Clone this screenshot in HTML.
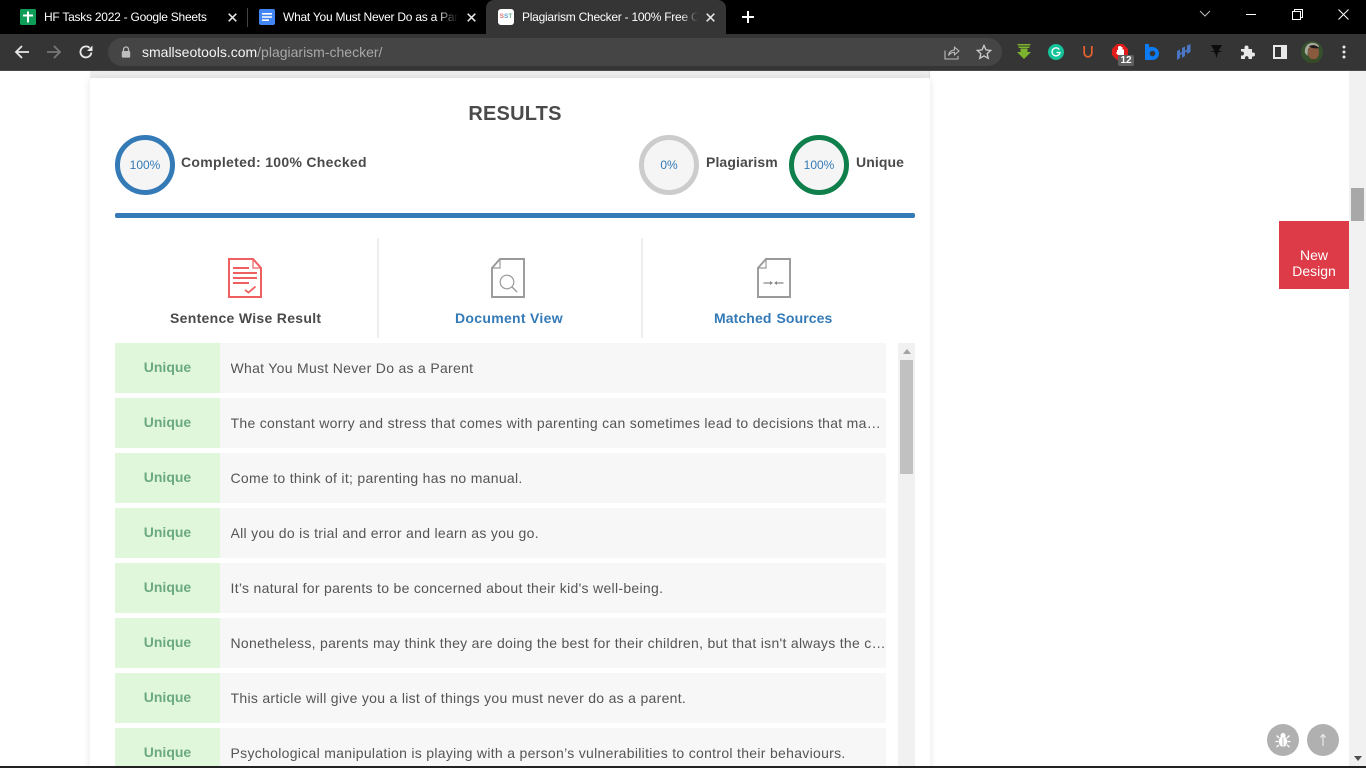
<!DOCTYPE html>
<html><head><meta charset="utf-8"><style>
*{box-sizing:border-box}
html,body{margin:0;padding:0;width:1366px;height:768px;overflow:hidden;background:#fff;font-family:"Liberation Sans",sans-serif}
#w{position:absolute;left:0;top:0;width:1366px;height:768px;overflow:hidden;background:#fff}
.a{position:absolute}
.t{position:absolute;white-space:nowrap;overflow:hidden}
.tab{color:#fff;font-size:12px;top:9px;height:16px;line-height:16px;letter-spacing:-.25px}
.row{position:absolute;left:115px;width:771px;height:50px;background:#f7f7f7}
.row b{position:absolute;left:0;top:0;width:105px;height:50px;background:#e1f7dc;color:#6aaa7e;font-size:14px;line-height:49px;text-align:center}
.row span{position:absolute;left:115.5px;top:0;width:655.5px;height:50px;line-height:50px;font-size:14px;color:#555;letter-spacing:.3px;white-space:nowrap;overflow:hidden;text-overflow:ellipsis}
.circ{position:absolute;top:135px;width:60px;height:60px;border-radius:50%;background:#f5f5f5;border:5px solid;color:#337ab7;font-size:12px;text-align:center;line-height:50px}
.lbl{position:absolute;top:154px;font-size:14px;font-weight:bold;color:#4a4a4a;letter-spacing:.1px;white-space:nowrap;line-height:16px}
.tb{position:absolute;top:310px;font-size:14px;font-weight:bold;letter-spacing:.3px;white-space:nowrap;line-height:16px}
</style></head><body><div id="w">
<!-- tab strip -->
<div class="a" style="left:0;top:0;width:1366px;height:34px;background:#000"></div>
<div class="a" style="left:486px;top:0;width:240px;height:34px;background:#353535;border-radius:8px 8px 0 0"></div>
<div class="a" style="left:247px;top:8px;width:1px;height:19px;background:#444"></div>
<!-- sheets icon -->
<svg class="a" style="left:20px;top:9px" width="16" height="16" viewBox="0 0 16 16"><rect width="16" height="16" rx="1.5" fill="#0f9d58"/><path d="M7 2.500h2v3h4v2H9v6H7v-6H3v-2h4z" fill="#fff"/></svg>
<div class="t tab" style="left:44px;width:170px">HF Tasks 2022 - Google Sheets</div>
<svg class="a" style="left:228px;top:13px" width="9" height="9" viewBox="0 0 9 9"><path d="M.7.7l7.600 7.600M8.300.7L.7 8.300" stroke="#e8e8e8" stroke-width="1.500"/></svg>
<!-- docs icon -->
<svg class="a" style="left:259px;top:9px" width="16" height="16" viewBox="0 0 16 16"><rect width="16" height="16" rx="2" fill="#4285f4"/><path d="M3 4h10v1.600H3zM3 7.200h10v1.600H3zM3 10.400h7V12H3z" fill="#fff"/></svg>
<div class="t tab" style="left:283px;width:175px;-webkit-mask-image:linear-gradient(90deg,#000 88%,transparent);">What You Must Never Do as a Parent</div>
<svg class="a" style="left:467px;top:13px" width="9" height="9" viewBox="0 0 9 9"><path d="M.7.7l7.600 7.600M8.300.7L.7 8.300" stroke="#e8e8e8" stroke-width="1.500"/></svg>
<!-- sst icon -->
<div class="a" style="left:498px;top:9px;width:16px;height:16px;background:#fff;border-radius:3px;font-size:6.5px;font-weight:bold;line-height:16px;text-align:center;white-space:nowrap"><span style="color:#e57373">S</span><span style="color:#64a0d8">S</span><span style="color:#6bb38a">T</span></div>
<div class="t tab" style="left:522px;width:176px;-webkit-mask-image:linear-gradient(90deg,#000 90%,transparent);">Plagiarism Checker - 100% Free Online</div>
<svg class="a" style="left:706px;top:13px" width="9" height="9" viewBox="0 0 9 9"><path d="M.7.7l7.600 7.600M8.300.7L.7 8.300" stroke="#e8e8e8" stroke-width="1.500"/></svg>
<svg class="a" style="left:741px;top:10px" width="14" height="14" viewBox="0 0 14 14"><path d="M7 1v12M1 7h12" stroke="#fff" stroke-width="2"/></svg>
<!-- window controls -->
<svg class="a" style="left:1199px;top:10px" width="12" height="8" viewBox="0 0 12 8"><path d="M1 1l5 5 5-5" fill="none" stroke="#bbb" stroke-width="1"/></svg>
<div class="a" style="left:1246px;top:14px;width:10px;height:1px;background:#fff"></div>
<svg class="a" style="left:1292px;top:9px" width="11" height="11" viewBox="0 0 11 11"><path d="M.5 2.500h8v8h-8zM2.500 2.500v-2h8v8h-2" fill="none" stroke="#fff"/></svg>
<svg class="a" style="left:1338px;top:9px" width="11" height="11" viewBox="0 0 11 11"><path d="M.5.5l10 10M10.500.5l-10 10" stroke="#fff" stroke-width="1"/></svg>
<!-- toolbar -->
<div class="a" style="left:0;top:34px;width:1366px;height:36px;background:#353535"></div>
<div class="a" style="left:0;top:70px;width:1366px;height:1px;background:#4a4a4a"></div>
<svg class="a" style="left:14px;top:44px" width="16" height="16" viewBox="0 0 16 16"><path d="M15 8H2M8 2L2 8l6 6" fill="none" stroke="#e8e8e8" stroke-width="1.800"/></svg>
<svg class="a" style="left:46px;top:44px" width="16" height="16" viewBox="0 0 16 16"><path d="M1 8h13M8 2l6 6-6 6" fill="none" stroke="#777" stroke-width="1.800"/></svg>
<svg class="a" style="left:78px;top:44px" width="16" height="16" viewBox="0 0 16 16"><path d="M13.400 8.500A5.500 5.500 0 1 1 11.600 3.800" fill="none" stroke="#e8e8e8" stroke-width="1.800"/><path d="M14.500 1.500v5.500H9z" fill="#e8e8e8"/></svg>
<div class="a" style="left:108px;top:38px;width:894px;height:28px;border-radius:14px;background:#454545"></div>
<svg class="a" style="left:121px;top:46px" width="10" height="12" viewBox="0 0 10 12"><path d="M2.500 5V3.500a2.500 2.500 0 0 1 5 0V5" fill="none" stroke="#bdbdbd" stroke-width="1.300"/><rect x=".8" y="5" width="8.400" height="6.600" rx="1" fill="#bdbdbd"/></svg>
<div class="t" style="left:142px;top:44px;height:17px;line-height:17px;font-size:14px;color:#f4f4f4;width:260px">smallseotools.com<span style="color:#a8a8a8">/plagiarism-checker/</span></div>
<svg class="a" style="left:944px;top:44px" width="16" height="16" viewBox="0 0 16 16"><path d="M1 6.500V15h13v-3" fill="none" stroke="#bbb" stroke-width="1.100"/><path d="M4.500 11.500c.5-3.500 3-5.500 6-5.500V3.200L15 7l-4.500 3.800V8.300c-2.500 0-4.500 1-6 3.200z" fill="none" stroke="#bbb" stroke-width="1.100"/></svg>
<svg class="a" style="left:976px;top:44px" width="16" height="16" viewBox="0 0 16 16"><path d="M8 1.500l2 4.400 4.700.5-3.500 3.200 1 4.700L8 11.900l-4.200 2.400 1-4.700L1.300 6.400 6 5.900z" fill="none" stroke="#c8c8c8" stroke-width="1.400"/></svg>
<!-- extensions -->
<svg class="a" style="left:1016px;top:43px" width="16" height="17" viewBox="0 0 16 17"><path d="M1 1h14l-1.500 1.500H2.500zM2 3.500h12L13 5H3z" fill="#7cb32c"/><path d="M4.500 5.500h7V9H15l-7 7-7-7h3.500z" fill="#7cb32c"/></svg>
<div class="a" style="left:1048px;top:44px;width:16px;height:16px;border-radius:50%;background:#15c39a"></div>
<svg class="a" style="left:1048px;top:44px" width="16" height="16" viewBox="0 0 16 16"><path d="M11.300 5.500A4 4 0 1 0 12 8.500H8.500" fill="none" stroke="#fff" stroke-width="1.300"/></svg>
<svg class="a" style="left:1083px;top:46px" width="10" height="12" viewBox="0 0 10 12"><path d="M1.200 0v7a3.800 3.800 0 0 0 7.600 0V0" fill="none" stroke="#e8622c" stroke-width="1.700"/></svg>
<svg class="a" style="left:1112px;top:44px" width="16" height="16" viewBox="0 0 16 16"><path d="M5 0h6l5 5v6l-5 5H5l-5-5V5z" fill="#e21b1b"/><path d="M4 9l1-1V6h1V2.500h1.200V2H9v1h1.500v2.500H12V11H6z" fill="#fff"/></svg>
<div class="a" style="left:1118px;top:55px;width:16px;height:11px;background:#5f5f5f;border-radius:2px;color:#fff;font-size:10px;font-weight:bold;line-height:11px;text-align:center">12</div>
<svg class="a" style="left:1145px;top:44px" width="15" height="16" viewBox="0 0 15 16"><path d="M0 0h4v3h3.500a6.500 6.500 0 0 1 0 13H0z" fill="#0d7bf2"/><circle cx="7.500" cy="9.500" r="2.800" fill="#353535"/></svg>
<svg class="a" style="left:1177px;top:44px" width="14" height="16" viewBox="0 0 14 16"><path d="M0 7l3-1.500V14l-3 2zM5 4l3-1.500V12l-3 2zM10 1.500L13.500 0v8L10 10zM3 9l2-1v2l-2 1zM8 6.500l2-1v2l-2 1z" fill="#4a76c4"/></svg>
<svg class="a" style="left:1209px;top:44px" width="15" height="15" viewBox="0 0 15 15"><path d="M2 1h11L9.500 7H14l-5 1.500L7.500 14 6 8.500 1 7h4.500z" fill="#0c0c0c"/></svg>
<svg class="a" style="left:1240px;top:44px" width="16" height="16" viewBox="0 0 16 16"><path d="M1 5h3.500V3.500a2 2 0 0 1 4 0V5H12v3.500h1a2 2 0 0 1 0 4h-1V15H8.500v-1.500a1.800 1.800 0 0 0-3.500 0V15H1v-3.500h1a2 2 0 0 0 0-4H1z" fill="#e8e8e8"/></svg>
<svg class="a" style="left:1273px;top:45px" width="14" height="14" viewBox="0 0 14 14"><path d="M0 0h14v14H0z" fill="#e8e8e8"/><path d="M2 2h6v10H2z" fill="#353535"/></svg>
<svg class="a" style="left:1301px;top:41px" width="22" height="22" viewBox="0 0 22 22"><circle cx="11" cy="11" r="11" fill="#35502c"/><path d="M4 12C3 5 8 1 13 2c3 .5 5 2 5 4L10 5 7 8l-.5 7z" fill="#a8a89c"/><ellipse cx="12.500" cy="11.500" rx="5.500" ry="7" fill="#8a5a3f"/><path d="M8 5.500c2-2 7-2 9.500 1L16 7.500l-5-.5z" fill="#1f1a18"/><path d="M6 22c1-3 4-4 6.500-4s4.500 1 5.500 3z" fill="#3a4a26"/></svg>
<svg class="a" style="left:1342px;top:45px" width="4" height="14" viewBox="0 0 4 14"><circle cx="2" cy="2" r="1.500" fill="#e8e8e8"/><circle cx="2" cy="7" r="1.500" fill="#e8e8e8"/><circle cx="2" cy="12" r="1.500" fill="#e8e8e8"/></svg>
<!-- page -->
<div class="a" style="left:90px;top:71px;width:840px;height:7px;background:#eee;border-right:1px solid #ddd"></div>
<div class="a" style="left:90px;top:78px;width:840px;height:700px;background:#fff;box-shadow:0 0 8px rgba(0,0,0,.1);border-radius:3px"></div>
<div class="t" style="left:115px;width:800px;top:102px;text-align:center;font-size:20px;line-height:24px;font-weight:bold;color:#4a4a4a;letter-spacing:.2px">RESULTS</div>
<div class="circ" style="left:115px;border-color:#337ab7">100%</div>
<div class="lbl" style="left:181px;letter-spacing:.3px">Completed: 100% Checked</div>
<div class="circ" style="left:639px;border-color:#ccc">0%</div>
<div class="lbl" style="left:706px">Plagiarism</div>
<div class="circ" style="left:789px;border-color:#0f7f4c">100%</div>
<div class="lbl" style="left:856px">Unique</div>
<div class="a" style="left:115px;top:213px;width:800px;height:5px;background:#337ab7;border-radius:2px"></div>
<div class="a" style="left:377px;top:238px;width:2px;height:100px;background:#eee"></div>
<div class="a" style="left:641px;top:238px;width:2px;height:100px;background:#eee"></div>
<svg class="a" style="left:227px;top:257px" width="36" height="42" viewBox="0 0 36 42" fill="none" stroke="#ef5f5f"><path d="M2 2h24l8 9v29H2z" stroke-width="2"/><path d="M26 2v9h8" stroke-width="1.200"/><path d="M6 11h16M6 16h24M6 21h24M6 26h16" stroke-width="1.900"/><path d="M18 33l3.500 2.500 7-6" stroke-width="1.800"/></svg>
<div class="tb" style="left:170px;color:#4a4a4a">Sentence Wise Result</div>
<svg class="a" style="left:490px;top:257px" width="36" height="42" viewBox="0 0 36 42" fill="none" stroke="#999"><path d="M10 2h24v38H2V11z" stroke-width="1.900"/><path d="M10 2v9H2" stroke-width="1.200"/><circle cx="17" cy="25" r="6.800" stroke-width="1.200"/><path d="M22 30l5 5" stroke-width="1.400"/></svg>
<div class="tb" style="left:455px;color:#337ab7;letter-spacing:.3px">Document View</div>
<svg class="a" style="left:755px;top:257px" width="36" height="42" viewBox="0 0 36 42" fill="none" stroke="#999"><path d="M11 2h24v38H3V11z" stroke-width="1.900"/><path d="M11 2v9H3" stroke-width="1.200"/><path d="M8.500 26h7M22 26h6.500" stroke-width="1.300" stroke="#888"/><path d="M15 24l3 2-3 2zM22 24l-3 2 3 2z" fill="#888" stroke="none"/></svg>
<div class="tb" style="left:714px;color:#337ab7;letter-spacing:.1px;word-spacing:1px">Matched Sources</div>
<div class="row" style="top:343px"><b>Unique</b><span>What You Must Never Do as a Parent</span></div>
<div class="row" style="top:398px"><b>Unique</b><span style="width:652px">The constant worry and stress that comes with parenting can sometimes lead to decisions that may affect your child's wellbeing.</span></div>
<div class="row" style="top:453px"><b>Unique</b><span>Come to think of it; parenting has no manual.</span></div>
<div class="row" style="top:508px"><b>Unique</b><span>All you do is trial and error and learn as you go.</span></div>
<div class="row" style="top:563px"><b>Unique</b><span>It’s natural for parents to be concerned about their kid's well-being.</span></div>
<div class="row" style="top:618px"><b>Unique</b><span>Nonetheless, parents may think they are doing the best for their children, but that isn't always the case for every single family.</span></div>
<div class="row" style="top:673px"><b>Unique</b><span>This article will give you a list of things you must never do as a parent.</span></div>
<div class="row" style="top:728px"><b>Unique</b><span>Psychological manipulation is playing with a person’s vulnerabilities to control their behaviours.</span></div>
<!-- inner scrollbar -->
<div class="a" style="left:898px;top:343px;width:17px;height:425px;background:#f1f1f1"></div>
<div class="a" style="left:903px;top:349px;width:0;height:0;border-left:4px solid transparent;border-right:4px solid transparent;border-bottom:5px solid #a3a3a3"></div>
<div class="a" style="left:900px;top:360px;width:13px;height:114px;background:#c1c1c1"></div>
<!-- page scrollbar -->
<div class="a" style="left:1349px;top:71px;width:17px;height:697px;background:#f1f1f1"></div>
<div class="a" style="left:1351px;top:188px;width:13px;height:33px;background:#a8a8a8"></div>
<div class="a" style="left:1354px;top:756px;width:0;height:0;border-left:4px solid transparent;border-right:4px solid transparent;border-top:5px solid #505050"></div>
<div class="a" style="left:1279px;top:221px;width:70px;height:68px;background:#dc3b47;color:#fff;font-size:14px;line-height:16px;text-align:center;padding-top:26px">New<br>Design</div>
<!-- floating buttons -->
<div class="a" style="left:1267px;top:724px;width:32px;height:32px;border-radius:50%;background:#b0b0b0"></div>
<svg class="a" style="left:1275px;top:732px" width="16" height="16" viewBox="0 0 16 16"><ellipse cx="8" cy="9.500" rx="4.200" ry="5.500" fill="#fff"/><circle cx="8" cy="3.500" r="2.500" fill="#fff"/><path d="M4 6L1.500 3.500M12 6l2.500-2.500M3.500 9.500H.5M12.500 9.500h3M4 13l-2.500 2M12 13l2.500 2" stroke="#fff" stroke-width="1.300"/><path d="M8 5.500V15" stroke="#b0b0b0" stroke-width=".9"/></svg>
<div class="a" style="left:1307px;top:724px;width:32px;height:32px;border-radius:50%;background:#b0b0b0"></div>
<svg class="a" style="left:1318px;top:733px" width="10" height="14" viewBox="0 0 10 14"><path d="M5 13V2M2.500 4.500L5 1.500l2.500 3" fill="none" stroke="#eee" stroke-width="1.100"/></svg>
<div class="a" style="left:0;top:766px;width:1366px;height:2px;background:#222"></div>
</div></body></html>
